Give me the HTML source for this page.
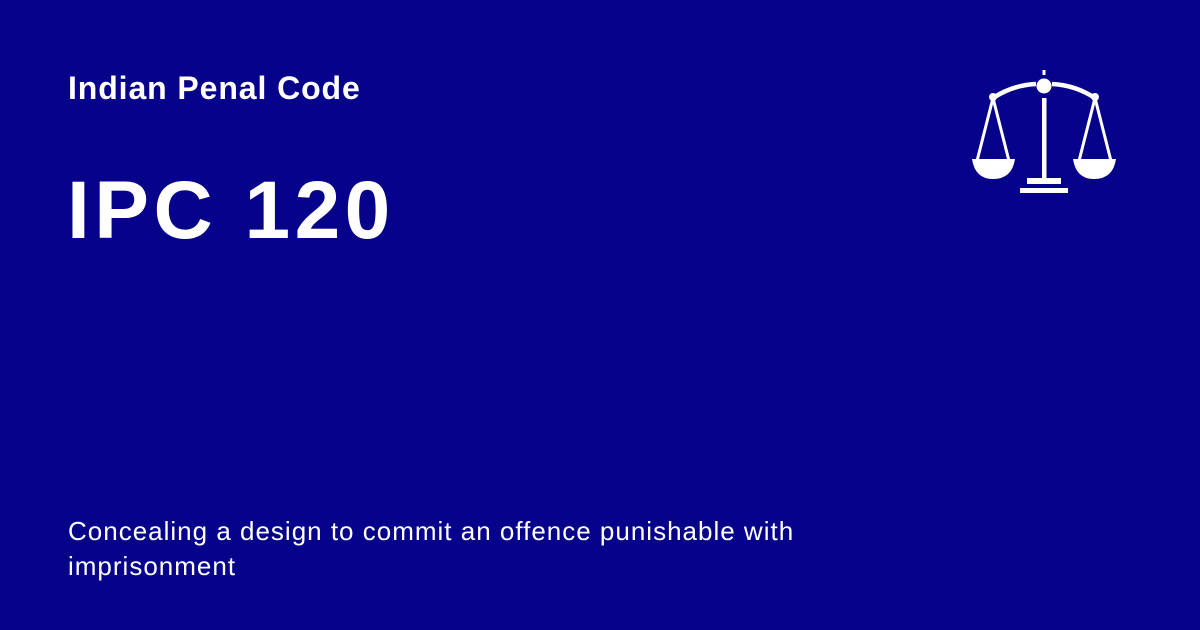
<!DOCTYPE html>
<html><head><style>
body{margin:0;width:1200px;height:630px;background:#06038a;font-family:"Liberation Sans",Arial,sans-serif;color:#fff;position:relative;overflow:hidden}
.t1{position:absolute;left:68px;top:70px;font-size:32px;font-weight:bold;letter-spacing:0.9px}
.t2{position:absolute;left:67px;top:164px;font-size:82px;font-weight:bold;letter-spacing:4.5px}
.t3{position:absolute;left:68px;top:514px;font-size:26px;line-height:35px;width:820px;letter-spacing:1px}
svg{position:absolute;left:0;top:0}
</style></head><body>
<div class="t1">Indian Penal Code</div>
<div class="t2">IPC 120</div>
<div class="t3">Concealing a design to commit an offence punishable with<br>imprisonment</div>
<svg width="1200" height="630">
<g fill="#fff" stroke="#fff">
<rect x="1042.5" y="70" width="3" height="5" stroke="none"/>
<circle cx="1044" cy="86" r="7.5" stroke="none"/>
<path d="M993 98 Q1013 85 1036 84 M1052 84 Q1075 85 1095 98" fill="none" stroke-width="4.5"/>
<circle cx="993" cy="97" r="4" stroke="none"/>
<circle cx="1095" cy="97" r="4" stroke="none"/>
<rect x="1042" y="98" width="4.5" height="80" stroke="none"/>
<rect x="1027" y="178" width="34" height="6" stroke="none"/>
<rect x="1020" y="188" width="48" height="5" stroke="none"/>
<path d="M993 98 L977 161 M993 98 L1009 161 M1095 98 L1079 161 M1095 98 L1111 161" fill="none" stroke-width="3"/>
<path d="M972 159 H1015 Q1012 179 993 179 Q975 179 972 159Z" stroke="none"/>
<path d="M1073 159 H1116 Q1113 179 1094 179 Q1076 179 1073 159Z" stroke="none"/>
</g></svg>
</body></html>
